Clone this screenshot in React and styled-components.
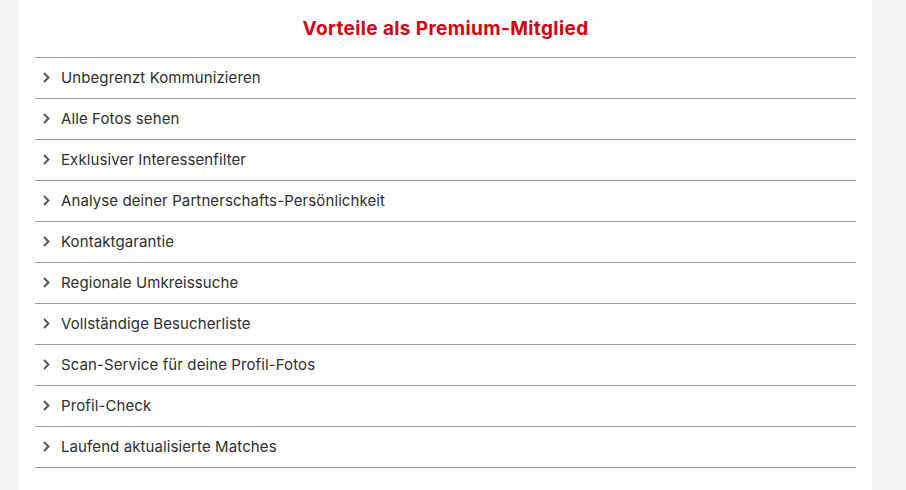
import React from "react";
import styled, { createGlobalStyle } from "styled-components";

const Global = createGlobalStyle`
  html, body { margin: 0; padding: 0; background: #f2f2f2; }
  body { font-family: Inter, "Open Sans", sans-serif; }
`;

const Page = styled.div`
  display: flex;
  min-height: 490px;
  padding-left: 19px;
`;

const Panel = styled.section`
  width: 853px;
  background: #fff;
  padding: 0 16px;
  box-sizing: border-box;
  min-height: 490px;
`;

const Title = styled.h2`
  margin: 0;
  height: 57px;
  display: flex;
  align-items: center;
  justify-content: center;
  color: #d40011;
  font-size: 19px;
  font-weight: 700;
  letter-spacing: 0.38px;
`;

const List = styled.ul`
  list-style: none;
  margin: 0;
  padding: 0;
  border-top: 1px solid #9b9b9b;
`;

const Row = styled.li`
  border-bottom: 1px solid #9b9b9b;
  display: flex;
  align-items: center;
  gap: 11px;
  padding: 0 0 1px 8px;
  box-sizing: border-box;
  height: 41px;
  color: #2e2e2e;
  font-size: 15px;
  letter-spacing: 0.1px;
  cursor: pointer;
`;

const Chevron = styled.svg`
  width: 7px;
  height: 11px;
  flex: none;
`;

const items = [
  "Unbegrenzt Kommunizieren",
  "Alle Fotos sehen",
  "Exklusiver Interessenfilter",
  "Analyse deiner Partnerschafts-Persönlichkeit",
  "Kontaktgarantie",
  "Regionale Umkreissuche",
  "Vollständige Besucherliste",
  "Scan-Service für deine Profil-Fotos",
  "Profil-Check",
  "Laufend aktualisierte Matches",
];

export default function App() {
  return (
    <>
      <Global />
      <Page>
        <Panel>
          <Title>Vorteile als Premium-Mitglied</Title>
          <List>
            {items.map((t) => (
              <Row key={t}>
                <Chevron viewBox="0 0 7 11">
                  <path d="M1 1 L5.5 5.5 L1 10" fill="none" stroke="#555" strokeWidth="1.9" />
                </Chevron>
                {t}
              </Row>
            ))}
          </List>
        </Panel>
      </Page>
    </>
  );
}
